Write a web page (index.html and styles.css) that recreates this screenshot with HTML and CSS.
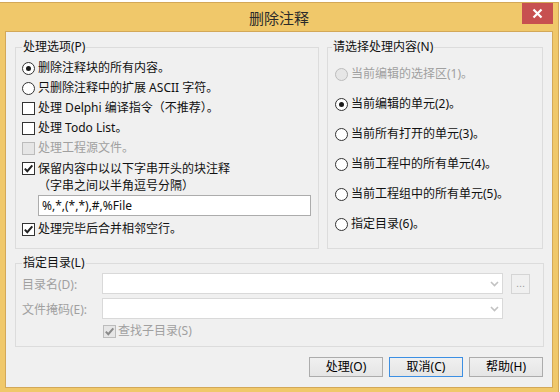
FILE: index.html
```html
<!DOCTYPE html>
<html lang="zh-CN">
<head>
<meta charset="UTF-8" />
<title>删除注释</title>
<link rel="stylesheet" href="styles.css">
</head>
<body>

<div class="window" role="dialog" aria-label="删除注释">
  <!-- Title bar -->
  <div class="titlebar">
    <span></span>
    <span class="title">删除注释</span>
    <button class="close" aria-label="关闭">
      <svg width="11" height="11" viewBox="0 0 11 11"><path d="M1.5 1.5 L9.5 9.5 M9.5 1.5 L1.5 9.5" stroke="#fff" stroke-width="2.2" fill="none"/></svg>
    </button>
  </div>

  <div class="client">
    <div class="top-row">
      <fieldset class="group group-options">
        <legend>处理选项(P)</legend>
        <label class="opt first"><span class="radio checked"></span>删除注释块的所有内容。</label>
        <label class="opt"><span class="radio"></span>只删除注释中的扩展 ASCII 字符。</label>
        <label class="opt"><span class="check"></span>处理 Delphi 编译指令（不推荐）。</label>
        <label class="opt"><span class="check"></span>处理 Todo List。</label>
        <label class="opt disabled"><span class="check"></span>处理工程源文件。</label>
        <label class="opt multi"><span class="check checked"><svg width="11" height="11" viewBox="0 0 11 11"><path d="M1.8 5.6 L4.3 8.2 L9.3 2.4" stroke="#222" stroke-width="2" fill="none"/></svg></span><span>保留内容中以以下字串开头的块注释<br>（字串之间以半角逗号分隔）</span></label>
        <input class="prefix" type="text" value="%,*,(*,*),#,%File" />
        <label class="opt last"><span class="check checked"><svg width="11" height="11" viewBox="0 0 11 11"><path d="M1.8 5.6 L4.3 8.2 L9.3 2.4" stroke="#222" stroke-width="2" fill="none"/></svg></span>处理完毕后合并相邻空行。</label>
      </fieldset>

      <fieldset class="group group-scope">
        <legend>请选择处理内容(N)</legend>
        <label class="opt disabled"><span class="radio"></span>当前编辑的选择区(1)。</label>
        <label class="opt"><span class="radio checked"></span>当前编辑的单元(2)。</label>
        <label class="opt"><span class="radio"></span>当前所有打开的单元(3)。</label>
        <label class="opt"><span class="radio"></span>当前工程中的所有单元(4)。</label>
        <label class="opt"><span class="radio"></span>当前工程组中的所有单元(5)。</label>
        <label class="opt"><span class="radio"></span>指定目录(6)。</label>
      </fieldset>
    </div>

    <fieldset class="group group-dir">
      <legend>指定目录(L)</legend>
      <div class="dir-row first">
        <span class="dir-label">目录名(D):</span>
        <div class="combo"><svg width="9" height="6" viewBox="0 0 9 6"><path d="M1 1 L4.5 4.5 L8 1" stroke="#c2c2c2" stroke-width="1.6" fill="none"/></svg></div>
        <button class="browse">...</button>
      </div>
      <div class="dir-row">
        <span class="dir-label">文件掩码(E):</span>
        <div class="combo"><svg width="9" height="6" viewBox="0 0 9 6"><path d="M1 1 L4.5 4.5 L8 1" stroke="#c2c2c2" stroke-width="1.6" fill="none"/></svg></div>
      </div>
      <label class="opt sub disabled"><span class="check checked"><svg width="11" height="11" viewBox="0 0 11 11"><path d="M1.8 5.6 L4.3 8.2 L9.3 2.4" stroke="#8a8a8a" stroke-width="2" fill="none"/></svg></span>查找子目录(S)</label>
    </fieldset>

    <div class="buttons">
      <button class="btn">处理(O)</button>
      <button class="btn default">取消(C)</button>
      <button class="btn">帮助(H)</button>
    </div>
  </div>
</div>

</body>
</html>
```

FILE: styles.css
```css
:root {
  --frame: #f0c86a;
  --frame-edge: #d3a858;
  --face: #f0f0f0;
  --group-line: #dcdcdc;
  --text: #111;
  --disabled: #a0a0a0;
}
*, *::before, *::after {
  box-sizing: border-box;
}
html, body {
  margin: 0;
  padding: 0;
  background: #fff;
  overflow: hidden;
  font-family: "Noto Sans", "Noto Sans CJK SC", sans-serif;
  font-size: 12px;
  color: var(--text);
}

/* Window frame */
.window {
  width: 559px;
  height: 390px;
  margin-top: 2px;
  background: var(--frame);
  border-top: 1px solid var(--frame-edge);
  border-right: 1px solid var(--frame-edge);
}
.titlebar {
  height: 28px;
  display: grid;
  grid-template-columns: 1fr auto 1fr;
  align-items: start;
}
.title {
  font-family: "Noto Sans CJK SC", sans-serif;
  font-size: 15px;
  line-height: 28px;
  color: #2b2b2b;
  padding-top: 1px;
}
.close {
  justify-self: end;
  width: 31px;
  height: 21px;
  margin-right: 5px;
  border: none;
  padding: 0;
  background: #c75050;
  display: flex;
  align-items: center;
  justify-content: center;
}

/* Client area */
.client {
  margin: 0 5px 0 5px;
  height: 357px;
  border: 1px solid var(--frame-edge);
  background: var(--face);
  padding: 7px 9px 0 9px;
}
.top-row {
  display: flex;
  gap: 8px;
}

/* Group boxes */
.group {
  margin: 0;
  min-width: 0;
  border: 1px solid var(--group-line);
  padding: 0 0 0 6px;
}
.group legend {
  padding: 0 1px;
  line-height: 16px;
  font-size: 12px;
}
.group-options {
  width: 304px;
  height: 210px;
}
.group-scope {
  width: 216px;
  height: 210px;
  padding-left: 7px;
}
.group-scope legend {
  margin-left: -3px;
}
.group-dir {
  width: 529px;
  height: 92px;
  margin-top: 6px;
}

/* Option rows */
.opt {
  display: flex;
  align-items: center;
  height: 20px;
  line-height: 20px;
  white-space: nowrap;
}
.opt.disabled {
  color: var(--disabled);
}
.group-options .opt.first {
  margin-top: 3px;
}
.group-options .opt.multi {
  height: 34px;
  line-height: 17px;
  align-items: flex-start;
  margin-top: 2px;
}
.group-options .opt.multi .check {
  margin-top: 2px;
}
.group-options .opt.last {
  margin-top: 3px;
}
.group-scope .opt {
  margin-top: 10px;
}
.group-scope .opt:first-of-type {
  margin-top: 9px;
}

.radio, .check {
  flex: none;
  width: 13px;
  height: 13px;
  margin-right: 3px;
  border: 1px solid #333;
  background: #fff;
  display: flex;
  align-items: center;
  justify-content: center;
}
.radio {
  border-radius: 50%;
}
.radio.checked::after {
  content: "";
  width: 5px;
  height: 5px;
  border-radius: 50%;
  background: #1a1a1a;
}
.disabled .radio, .disabled .check {
  border-color: #bcbcbc;
  background: #e6e6e6;
}
.group-scope .opt .radio {
  margin-right: 3px;
}

/* Prefix text field */
.prefix {
  display: block;
  width: 273px;
  height: 21px;
  margin: 1px 0 0 16px;
  padding: 0 3px;
  border: 1px solid #acacac;
  background: #fff;
  font-family: "Noto Sans", sans-serif;
  font-size: 12px;
  color: var(--text);
}

/* Directory group */
.dir-row {
  display: flex;
  align-items: center;
  height: 21px;
  margin-top: 4px;
}
.dir-row.first {
  margin-top: 2px;
}
.dir-label {
  width: 80px;
  color: var(--disabled);
  white-space: nowrap;
}
.combo {
  width: 401px;
  height: 21px;
  border: 1px solid #d9d9d9;
  background: #fff;
  display: flex;
  align-items: center;
  justify-content: flex-end;
  padding-right: 3px;
}
.browse {
  width: 19px;
  height: 20px;
  margin-left: 8px;
  padding: 0 0 4px;
  border: 1px solid #d5d5d5;
  background: #f0f0f0;
  color: var(--disabled);
  font-size: 11px;
  line-height: 1;
  display: flex;
  align-items: flex-end;
  justify-content: center;
}
.opt.sub {
  margin-top: 2px;
  padding-left: 81px;
}
.opt.sub .check {
  margin-right: 2px;
}

/* Dialog buttons */
.buttons {
  display: flex;
  justify-content: flex-end;
  gap: 6px;
  margin-top: 10px;
}
.btn {
  width: 74px;
  height: 20px;
  padding: 0;
  border: 1px solid #acacac;
  background: linear-gradient(#f0f0f0, #e5e5e5);
  font-family: "Noto Sans", "Noto Sans CJK SC", sans-serif;
  font-size: 12px;
  line-height: 18px;
  color: #000;
}
.btn.default {
  border-color: #3c8fe3;
}
```
